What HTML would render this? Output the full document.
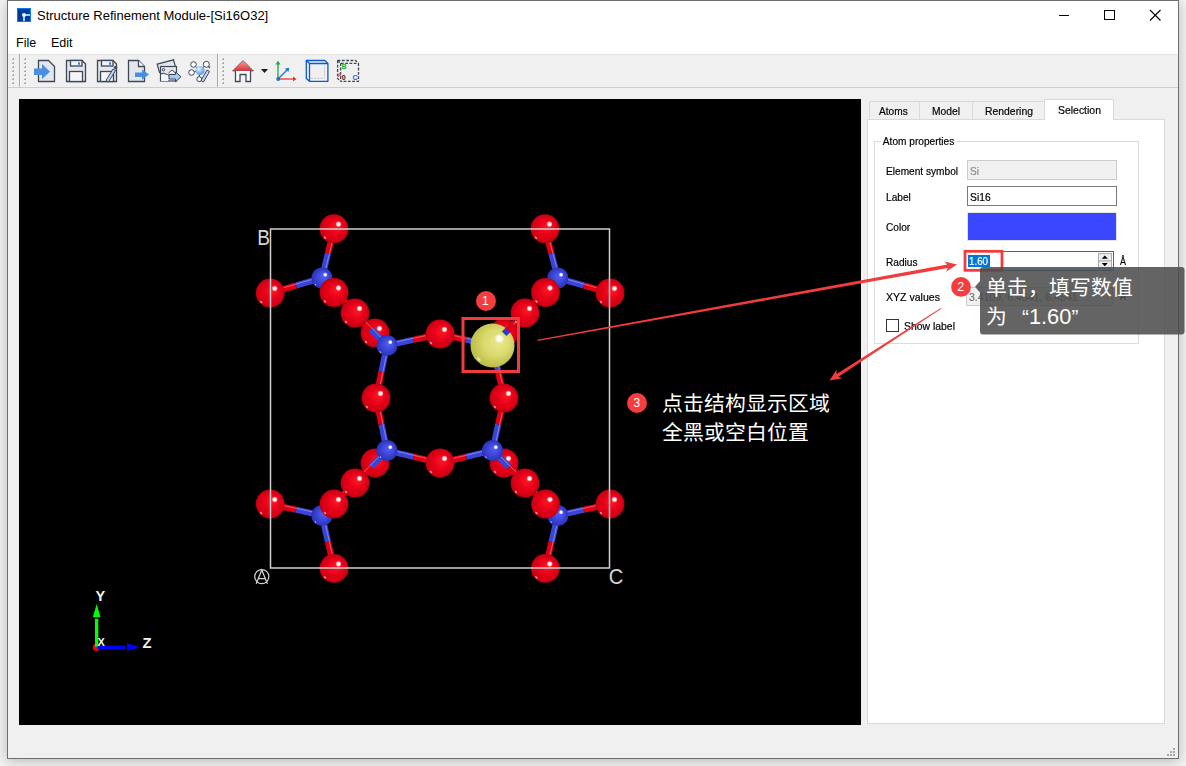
<!DOCTYPE html>
<html lang="zh-CN"><head><meta charset="utf-8">
<style>
*{margin:0;padding:0;box-sizing:border-box}
html,body{width:1186px;height:766px;overflow:hidden;background:#f3f3f3;font-family:"Liberation Sans",sans-serif;color:#000}
.abs{position:absolute}
#win{position:absolute;left:7px;top:0;width:1172px;height:759px;border:1px solid #6f6f6f;background:#f0f0f0;box-shadow:0 2px 12px rgba(0,0,0,.25)}
#titlebar{position:absolute;left:8px;top:1px;width:1170px;height:53px;background:#fff}
.t{position:absolute;white-space:nowrap;line-height:1}
#toolbar{position:absolute;left:8px;top:54px;width:1170px;height:34px;background:#f0f0f0;border-top:1px solid #e3e3e3;border-bottom:1px solid #cfcfcf}
#viewport{position:absolute;left:19px;top:99px;width:842px;height:626px;background:#000}
.p{font-size:11.2px;color:#000;transform:scaleX(.905);transform-origin:0 0;-webkit-text-stroke:.2px currentColor}
</style></head><body>
<div id="win"></div>
<div id="titlebar"></div>
<div id="toolbar"></div>
<div id="viewport"></div>

<!-- title -->
<svg class="abs" style="left:17px;top:8px" width="14" height="14" viewBox="0 0 14 14">
<rect x="0" y="0" width="14" height="14" fill="#0a7be0"/>
<rect x="1" y="1" width="12" height="12" fill="#003c96"/>
<rect x="6" y="6" width="7" height="2" fill="#8fd0ff"/>
<rect x="6" y="7" width="2" height="6" fill="#8fd0ff"/>
<circle cx="7" cy="7" r="2" fill="#e8f6ff"/>
</svg>
<div class="t" style="left:37px;top:9px;font-size:13px">Structure Refinement Module-[Si16O32]</div>
<div class="t" style="left:16px;top:37px;font-size:12.5px">File</div>
<div class="t" style="left:51px;top:37px;font-size:12.5px">Edit</div>

<!-- window controls -->
<svg class="abs" style="left:1040px;top:0" width="138" height="32">
<line x1="19" y1="15.5" x2="29" y2="15.5" stroke="#000" stroke-width="1"/>
<rect x="64.5" y="10.5" width="10" height="9" fill="none" stroke="#000" stroke-width="1"/>
<line x1="110" y1="10" x2="120.5" y2="20.5" stroke="#000" stroke-width="1.1"/>
<line x1="120.5" y1="10" x2="110" y2="20.5" stroke="#000" stroke-width="1.1"/>
</svg>


<!-- toolbar icons -->
<svg class="abs" style="left:0;top:54px" width="380" height="34" viewBox="0 54 380 34">
<g fill="#a8a8a8"><rect x="13" y="58" width="1" height="1"/><rect x="12" y="59" width="2" height="1"/><rect x="13" y="62" width="1" height="1"/><rect x="12" y="63" width="2" height="1"/><rect x="13" y="66" width="1" height="1"/><rect x="12" y="67" width="2" height="1"/><rect x="13" y="70" width="1" height="1"/><rect x="12" y="71" width="2" height="1"/><rect x="13" y="74" width="1" height="1"/><rect x="12" y="75" width="2" height="1"/><rect x="13" y="78" width="1" height="1"/><rect x="12" y="79" width="2" height="1"/><rect x="13" y="82" width="1" height="1"/><rect x="12" y="83" width="2" height="1"/><rect x="25" y="58" width="1" height="1"/><rect x="24" y="59" width="2" height="1"/><rect x="25" y="62" width="1" height="1"/><rect x="24" y="63" width="2" height="1"/><rect x="25" y="66" width="1" height="1"/><rect x="24" y="67" width="2" height="1"/><rect x="25" y="70" width="1" height="1"/><rect x="24" y="71" width="2" height="1"/><rect x="25" y="74" width="1" height="1"/><rect x="24" y="75" width="2" height="1"/><rect x="25" y="78" width="1" height="1"/><rect x="24" y="79" width="2" height="1"/><rect x="25" y="82" width="1" height="1"/><rect x="24" y="83" width="2" height="1"/><rect x="223" y="58" width="1" height="1"/><rect x="222" y="59" width="2" height="1"/><rect x="223" y="62" width="1" height="1"/><rect x="222" y="63" width="2" height="1"/><rect x="223" y="66" width="1" height="1"/><rect x="222" y="67" width="2" height="1"/><rect x="223" y="70" width="1" height="1"/><rect x="222" y="71" width="2" height="1"/><rect x="223" y="74" width="1" height="1"/><rect x="222" y="75" width="2" height="1"/><rect x="223" y="78" width="1" height="1"/><rect x="222" y="79" width="2" height="1"/><rect x="223" y="82" width="1" height="1"/><rect x="222" y="83" width="2" height="1"/></g>
<rect x="19" y="54" width="1" height="33" fill="#a8a8a8"/><rect x="20" y="54" width="1" height="33" fill="#fafafa"/>
<rect x="217" y="54" width="1" height="33" fill="#a8a8a8"/><rect x="218" y="54" width="1" height="33" fill="#fafafa"/>
<g stroke="#3c4858" stroke-width="1.3" stroke-linejoin="miter">
<!-- icon1 import -->
<path d="M38.5 60.5 H48.5 L54.5 66.5 V81.5 H38.5 Z" fill="#e4e6ec"/>
<!-- icon2 save -->
<path d="M66.5 60.5 H82 L85.5 64 V81.5 H66.5 Z" fill="#e4e6ec"/>
<rect x="70.5" y="60.5" width="11.5" height="5.5" fill="#f4f5f8"/>
<rect x="69.5" y="71.5" width="13" height="10" fill="#f4f5f8"/>
<!-- icon3 save as -->
<path d="M97.5 60.5 H113 L116.5 64 V81.5 H97.5 Z" fill="#e4e6ec"/>
<rect x="101.5" y="60.5" width="11.5" height="5.5" fill="#f4f5f8"/>
<rect x="100.5" y="71.5" width="13" height="10" fill="#f4f5f8"/>
<!-- icon4 export -->
<path d="M128.5 60.5 H138.5 L144.5 66.5 V81.5 H128.5 Z" fill="#e4e6ec"/>
<path d="M138.5 60.5 V66.5 H144.5" fill="#fff"/>
</g>
<path d="M34 68.5 H42 V64 L50 71.7 L42 79 V74.9 H34 Z" fill="#4a90e2"/>
<rect x="78" y="62.3" width="2" height="2.5" fill="#3a86e0"/>
<rect x="109" y="62.3" width="2" height="2.5" fill="#3a86e0"/>
<path d="M106 80.5 L113 69 L115.5 70.5 L108.5 82 Z" fill="#bcd6f4" stroke="#3c4858" stroke-width="1"/>
<path d="M113.5 68 L115 65.8 L117.5 67.3 L116 69.5 Z" fill="#3c4858"/>
<path d="M135 72.4 H142 V69.6 L149 74.5 L142 79.7 V77 H135 Z" fill="#4a90e2"/>
<!-- icon5 image export -->
<g stroke="#3c4858" stroke-width="1.2">
<path d="M157.2 64.2 L173.5 59.8 L175.8 68 L159.5 72.4 Z" fill="#e4e6ec"/>
<rect x="160.5" y="66.5" width="16" height="14.5" fill="#e4e6ec"/>
<path d="M160.5 74 Q164 72 167 74.5 T172 74" fill="none" stroke-width="1"/>
<circle cx="163.5" cy="69.7" r="1.2" fill="none" stroke-width="1"/>
<path d="M168.5 73 L172 70 L175.5 73" fill="#f4f5f8" stroke-width="1"/>
</g>
<rect x="161" y="75" width="7" height="6" fill="#f4f5f8"/>
<path d="M169 74.5 H175.5 V72 L181 76.8 L175.5 81.8 V79 H169 Z" fill="#a8ccf2" stroke="#3c4858" stroke-width="1"/>
<!-- icon6 molecule -->
<g stroke="#3c4858" stroke-width="1" fill="#fff">
<line x1="193.5" y1="64.5" x2="200" y2="70.5"/><line x1="206" y1="64.5" x2="200" y2="70.5"/><line x1="191.5" y1="72.5" x2="200" y2="70.5"/><line x1="199" y1="79" x2="200" y2="70.5"/>
<circle cx="193.5" cy="64.5" r="2.8"/><circle cx="206.3" cy="64.3" r="3"/><circle cx="191.5" cy="72.5" r="2.8"/><circle cx="199.3" cy="79.2" r="2.5"/>
<path d="M201 80.5 L207 70 L209.5 71.5 L203.5 82 Z" fill="#bcd6f4"/>
</g>
<defs>
<radialGradient id="tbball" cx="40%" cy="35%" r="65%"><stop offset="0" stop-color="#e8f3ff"/><stop offset="1" stop-color="#4f95e6"/></radialGradient>
<linearGradient id="roof" x1="0" y1="0" x2="0" y2="1"><stop offset="0" stop-color="#ff9a9a"/><stop offset="1" stop-color="#e03030"/></linearGradient>
</defs>
<circle cx="200" cy="70.5" r="4.6" fill="url(#tbball)"/>
<path d="M208 67 L210.5 66 L209.5 68.5 Z" fill="#3c4858"/>
<!-- house -->
<path d="M232.5 71 L243 60.5 L253.5 71 Z" fill="url(#roof)" stroke="#55606e" stroke-width="0.8"/>
<path d="M235.5 71 V81.5 H240 V74.5 H246 V81.5 H250.5 V71" fill="#fff" stroke="#3c4858" stroke-width="1.3"/>
<path d="M261 69 H268 L264.5 73 Z" fill="#1a1a1a"/>
<!-- axes -->
<line x1="278" y1="79" x2="278" y2="64" stroke="#19a83c" stroke-width="1.3"/>
<path d="M275.5 64.5 L278 60.8 L280.5 64.5 Z" fill="#19a83c"/>
<line x1="278" y1="79" x2="294" y2="79" stroke="#ee3333" stroke-width="1.3"/>
<path d="M293 76.5 L296.5 79 L293 81.5 Z" fill="#ee3333"/>
<line x1="278" y1="79" x2="287" y2="70" stroke="#1f6fd6" stroke-width="1.3"/>
<path d="M285 68.5 L289.2 67.8 L288.5 72 Z" fill="#1f6fd6"/>
<circle cx="278.2" cy="79" r="2" fill="#1f6fd6"/>
<!-- cube -->
<g fill="none" stroke="#0a58d8" stroke-width="1.3" stroke-linejoin="round">
<path d="M306.3 60.5 H324.8 L327.9 63.5 V81.3 H309.5 L306.3 78.5 Z"/>
<path d="M306.3 60.5 L309.5 63.5 H327.9 M309.5 63.5 V81.3"/>
</g>
<path d="M311 78.3 H324.5 V65" fill="none" stroke="#c0c4cc" stroke-width="1" stroke-dasharray="2 1.2"/>
<!-- dashed cube -->
<g fill="none" stroke="#3c4858" stroke-width="1.3" stroke-dasharray="2.8 1.5">
<path d="M337.6 60.5 H355.6 L358.5 63.3"/>
<path d="M358.5 63.3 V81.3 H340.6"/>
<path d="M337.6 60.5 V78.5 L340.6 81.3"/>
<path d="M337.6 60.5 L340.6 63.3 H358.5 M340.6 63.3 V81.3"/>
</g>
<text x="341.4" y="68.8" font-family="Liberation Sans" font-weight="bold" font-size="7" fill="#16b33a">B</text>
<text x="337.8" y="76.9" font-family="Liberation Sans" font-weight="bold" font-size="5.5" fill="#e83838">A</text>
<text x="341.8" y="80.1" font-family="Liberation Sans" font-weight="bold" font-size="7" fill="#222">0</text>
<text x="352.6" y="80.1" font-family="Liberation Sans" font-weight="bold" font-size="7" fill="#1a62d6">C</text>
</svg>

<!-- right panel -->
<div class="abs" style="left:867px;top:119px;width:298px;height:605px;background:#fff;border:1px solid #d9d9d9"></div>
<div class="abs" style="left:869px;top:101px;width:51px;height:18px;background:#f0f0f0;border:1px solid #d9d9d9;border-bottom:none"></div>
<div class="abs" style="left:919px;top:101px;width:54px;height:18px;background:#f0f0f0;border:1px solid #d9d9d9;border-bottom:none"></div>
<div class="abs" style="left:972px;top:101px;width:73px;height:18px;background:#f0f0f0;border:1px solid #d9d9d9;border-bottom:none"></div>
<div class="abs" style="left:1044px;top:99px;width:70px;height:21px;background:#fff;border:1px solid #d9d9d9;border-bottom:none"></div>
<div class="t p" style="left:879px;top:106px">Atoms</div>
<div class="t p" style="left:932px;top:106px;transform:scaleX(.918)">Model</div>
<div class="t p" style="left:985px;top:106px;transform:scaleX(.929)">Rendering</div>
<div class="t p" style="left:1058px;top:105px;transform:scaleX(.933)">Selection</div>
<div class="abs" style="left:874px;top:141px;width:265px;height:203px;border:1px solid #dcdcdc"></div>
<div class="t p" style="left:881px;top:136px;background:#fff;padding:0 2px">Atom properties</div>
<div class="t p" style="left:886px;top:166px">Element symbol</div>
<div class="abs" style="left:967px;top:160px;width:150px;height:20px;background:#f0f0f0;border:1px solid #cccccc"></div>
<div class="t p" style="left:970px;top:166px;color:#8c8c8c">Si</div>
<div class="t p" style="left:886px;top:192px">Label</div>
<div class="abs" style="left:967px;top:186px;width:150px;height:20px;background:#fff;border:1px solid #7a7a7a"></div>
<div class="t p" style="left:970px;top:192px;transform:scaleX(.923)">Si16</div>
<div class="t p" style="left:886px;top:222px">Color</div>
<div class="abs" style="left:967px;top:212px;width:150px;height:29px;background:#3b47ff;border:1px solid #e3e3e3"></div>
<div class="t p" style="left:886px;top:257px">Radius</div>
<div class="abs" style="left:965px;top:251px;width:149px;height:20px;background:#fff;border:1px solid #0078d7"></div>
<div class="abs" style="left:968px;top:255px;width:22px;height:12px;background:#0078d7"></div>
<div class="t p" style="left:969px;top:256px;color:#fff;transform:scaleX(.872)">1.60</div>
<svg class="abs" style="left:1098px;top:253px" width="14" height="16"><rect x=".5" y=".5" width="13" height="7.5" fill="#ececec" stroke="#adadad"/><rect x=".5" y="8" width="13" height="7.5" fill="#ececec" stroke="#adadad"/><path d="M3.8 5.8 H9.8 L6.8 2.6 Z M3.8 10 H9.8 L6.8 13.2 Z" fill="#000"/></svg>
<div class="t p" style="left:1120px;top:256px;transform:scaleX(.8)">Å</div>
<div class="t p" style="left:886px;top:292px;transform:scaleX(.943)">XYZ values</div>
<div class="abs" style="left:966px;top:287px;width:147px;height:19px;background:#f0f0f0;border:1px solid #cccccc"></div>
<div class="t p" style="left:969px;top:292px;color:#747474;transform:scaleX(.944)">3.4109, 6.4541, 6.4541</div>
<div class="t p" style="left:1120px;top:291px;transform:scaleX(.8)">Å</div>
<div class="abs" style="left:886px;top:319px;width:13px;height:13px;background:#fff;border:1px solid #333"></div>
<div class="t p" style="left:904px;top:321px;transform:scaleX(.931)">Show label</div>
<!-- size grip -->
<svg class="abs" style="left:1161px;top:745px" width="16" height="12"><g fill="#a8a8a8"><rect x="12" y="3" width="2" height="2"/><rect x="9" y="6" width="2" height="2"/><rect x="12" y="6" width="2" height="2"/><rect x="6" y="9" width="2" height="2"/><rect x="9" y="9" width="2" height="2"/><rect x="12" y="9" width="2" height="2"/></g></svg>

<!--STRUCT-->
<svg class="abs" style="left:0;top:0" width="1186" height="766" viewBox="0 0 1186 766">
<defs>
<radialGradient id="gO" cx="0.5" cy="0.5" r="0.5" fx="0.62" fy="0.38"><stop offset="0" stop-color="#ff1c22"/><stop offset="0.55" stop-color="#e8001a"/><stop offset="0.9" stop-color="#d00012"/><stop offset="1" stop-color="#b5000e"/></radialGradient>
<radialGradient id="gS" cx="0.5" cy="0.5" r="0.5" fx="0.62" fy="0.38"><stop offset="0" stop-color="#5a62f0"/><stop offset="0.6" stop-color="#3a44d8"/><stop offset="1" stop-color="#2a32b0"/></radialGradient>
<radialGradient id="gY" cx="0.55" cy="0.45" r="0.55" fx="0.68" fy="0.4"><stop offset="0" stop-color="#eaea90"/><stop offset="0.55" stop-color="#dada6e"/><stop offset="1" stop-color="#bcbc48"/></radialGradient>
<radialGradient id="hl"><stop offset="0" stop-color="#fff"/><stop offset=".45" stop-color="#fff" stop-opacity=".95"/><stop offset="1" stop-color="#fff" stop-opacity="0"/></radialGradient>
<radialGradient id="hl2"><stop offset="0" stop-color="#fff" stop-opacity=".8"/><stop offset="1" stop-color="#fff" stop-opacity="0"/></radialGradient>
<filter id="hb" x="-1" y="-1" width="3" height="3"><feGaussianBlur stdDeviation="0.7"/></filter>
</defs>


<circle cx="375" cy="333" r="14.4" fill="url(#gO)"/><circle cx="379.5" cy="328.5" r="3.2" fill="url(#hl)"/><ellipse cx="366.0" cy="342.0" rx="2.2" ry="1.3" transform="rotate(45 366.0 342.0)" fill="url(#hl2)"/>
<circle cx="504" cy="333" r="14.4" fill="url(#gO)"/><circle cx="508.5" cy="328.5" r="3.2" fill="url(#hl)"/><ellipse cx="495.0" cy="342.0" rx="2.2" ry="1.3" transform="rotate(45 495.0 342.0)" fill="url(#hl2)"/>
<circle cx="375" cy="463" r="14.4" fill="url(#gO)"/><circle cx="379.5" cy="458.5" r="3.2" fill="url(#hl)"/><ellipse cx="366.0" cy="472.0" rx="2.2" ry="1.3" transform="rotate(45 366.0 472.0)" fill="url(#hl2)"/>
<circle cx="504" cy="463" r="14.4" fill="url(#gO)"/><circle cx="508.5" cy="458.5" r="3.2" fill="url(#hl)"/><ellipse cx="495.0" cy="472.0" rx="2.2" ry="1.3" transform="rotate(45 495.0 472.0)" fill="url(#hl2)"/>
<line x1="387" y1="345.5" x2="371.0" y2="329.25" stroke="#3a44d6" stroke-width="6.2"/><line x1="371.0" y1="329.25" x2="355" y2="313" stroke="#e00014" stroke-width="6.2"/><line x1="388.0" y1="344.5" x2="356.0" y2="312.0" stroke="#fff" stroke-opacity=".35" stroke-width="1"/>
<line x1="387" y1="345.5" x2="413.5" y2="339.75" stroke="#3a44d6" stroke-width="6.2"/><line x1="413.5" y1="339.75" x2="440" y2="334" stroke="#e00014" stroke-width="6.2"/><line x1="386.7" y1="344.1" x2="439.7" y2="332.6" stroke="#fff" stroke-opacity=".35" stroke-width="1"/>
<line x1="387" y1="345.5" x2="381.5" y2="371.75" stroke="#3a44d6" stroke-width="6.2"/><line x1="381.5" y1="371.75" x2="376" y2="398" stroke="#e00014" stroke-width="6.2"/><line x1="388.4" y1="345.8" x2="377.4" y2="398.3" stroke="#fff" stroke-opacity=".35" stroke-width="1"/>
<line x1="492.5" y1="345.5" x2="508.75" y2="329.25" stroke="#3a44d6" stroke-width="6.2"/><line x1="508.75" y1="329.25" x2="525" y2="313" stroke="#e00014" stroke-width="6.2"/><line x1="491.5" y1="344.5" x2="524.0" y2="312.0" stroke="#fff" stroke-opacity=".35" stroke-width="1"/>
<line x1="492.5" y1="345.5" x2="466.25" y2="339.75" stroke="#3a44d6" stroke-width="6.2"/><line x1="466.25" y1="339.75" x2="440" y2="334" stroke="#e00014" stroke-width="6.2"/><line x1="492.8" y1="344.1" x2="440.3" y2="332.6" stroke="#fff" stroke-opacity=".35" stroke-width="1"/>
<line x1="492.5" y1="345.5" x2="498.25" y2="371.75" stroke="#3a44d6" stroke-width="6.2"/><line x1="498.25" y1="371.75" x2="504" y2="398" stroke="#e00014" stroke-width="6.2"/><line x1="493.9" y1="345.2" x2="505.4" y2="397.7" stroke="#fff" stroke-opacity=".35" stroke-width="1"/>
<line x1="387" y1="450.5" x2="371.0" y2="466.75" stroke="#3a44d6" stroke-width="6.2"/><line x1="371.0" y1="466.75" x2="355" y2="483" stroke="#e00014" stroke-width="6.2"/><line x1="386.0" y1="449.5" x2="354.0" y2="482.0" stroke="#fff" stroke-opacity=".35" stroke-width="1"/>
<line x1="387" y1="450.5" x2="413.5" y2="456.75" stroke="#3a44d6" stroke-width="6.2"/><line x1="413.5" y1="456.75" x2="440" y2="463" stroke="#e00014" stroke-width="6.2"/><line x1="387.3" y1="449.1" x2="440.3" y2="461.6" stroke="#fff" stroke-opacity=".35" stroke-width="1"/>
<line x1="387" y1="450.5" x2="381.5" y2="424.25" stroke="#3a44d6" stroke-width="6.2"/><line x1="381.5" y1="424.25" x2="376" y2="398" stroke="#e00014" stroke-width="6.2"/><line x1="388.4" y1="450.2" x2="377.4" y2="397.7" stroke="#fff" stroke-opacity=".35" stroke-width="1"/>
<line x1="492.5" y1="450.5" x2="508.75" y2="466.75" stroke="#3a44d6" stroke-width="6.2"/><line x1="508.75" y1="466.75" x2="525" y2="483" stroke="#e00014" stroke-width="6.2"/><line x1="493.5" y1="449.5" x2="526.0" y2="482.0" stroke="#fff" stroke-opacity=".35" stroke-width="1"/>
<line x1="492.5" y1="450.5" x2="466.25" y2="456.75" stroke="#3a44d6" stroke-width="6.2"/><line x1="466.25" y1="456.75" x2="440" y2="463" stroke="#e00014" stroke-width="6.2"/><line x1="492.2" y1="449.1" x2="439.7" y2="461.6" stroke="#fff" stroke-opacity=".35" stroke-width="1"/>
<line x1="492.5" y1="450.5" x2="498.25" y2="424.25" stroke="#3a44d6" stroke-width="6.2"/><line x1="498.25" y1="424.25" x2="504" y2="398" stroke="#e00014" stroke-width="6.2"/><line x1="493.9" y1="450.8" x2="505.4" y2="398.3" stroke="#fff" stroke-opacity=".35" stroke-width="1"/>
<circle cx="387" cy="345.5" r="10.6" fill="url(#gS)"/><circle cx="390.3" cy="342.2" r="2.4" fill="url(#hl)"/><ellipse cx="380.4" cy="352.1" rx="1.6" ry="1.0" transform="rotate(45 380.4 352.1)" fill="url(#hl2)"/>
<circle cx="492.5" cy="345.5" r="22" fill="url(#gY)"/><circle cx="499.4" cy="338.6" r="4.9" fill="url(#hl)"/><ellipse cx="478.8" cy="359.2" rx="3.4" ry="2.0" transform="rotate(45 478.8 359.2)" fill="url(#hl2)"/>
<circle cx="387" cy="450.5" r="10.6" fill="url(#gS)"/><circle cx="390.3" cy="447.2" r="2.4" fill="url(#hl)"/><ellipse cx="380.4" cy="457.1" rx="1.6" ry="1.0" transform="rotate(45 380.4 457.1)" fill="url(#hl2)"/>
<circle cx="492.5" cy="450.5" r="10.6" fill="url(#gS)"/><circle cx="495.8" cy="447.2" r="2.4" fill="url(#hl)"/><ellipse cx="485.9" cy="457.1" rx="1.6" ry="1.0" transform="rotate(45 485.9 457.1)" fill="url(#hl2)"/>
<line x1="504.2" y1="333.8" x2="508.2" y2="329.8" stroke="#2a3bd0" stroke-width="6.4"/><line x1="507.8" y1="330.2" x2="516" y2="322" stroke="#d8001a" stroke-width="6.4"/><ellipse cx="516" cy="322" rx="1.3" ry="2.8" transform="rotate(45 516 322)" fill="#fff" opacity=".6" filter="url(#hb)"/>
<line x1="322" y1="278" x2="328.0" y2="253.35" stroke="#3a44d6" stroke-width="6.2"/><line x1="328.0" y1="253.35" x2="334" y2="228.7" stroke="#e00014" stroke-width="6.2"/><line x1="323.4" y1="278.3" x2="335.4" y2="229.0" stroke="#fff" stroke-opacity=".35" stroke-width="1"/>
<line x1="322" y1="278" x2="296.1" y2="285.5" stroke="#3a44d6" stroke-width="6.2"/><line x1="296.1" y1="285.5" x2="270.2" y2="293" stroke="#e00014" stroke-width="6.2"/><line x1="321.6" y1="276.7" x2="269.8" y2="291.7" stroke="#fff" stroke-opacity=".35" stroke-width="1"/>
<line x1="322" y1="278" x2="338.5" y2="295.5" stroke="#3a44d6" stroke-width="6.2"/><line x1="338.5" y1="295.5" x2="355" y2="313" stroke="#e00014" stroke-width="6.2"/><line x1="323.0" y1="277.0" x2="356.0" y2="312.0" stroke="#fff" stroke-opacity=".35" stroke-width="1"/>
<line x1="557.8" y1="278" x2="551.4" y2="253.35" stroke="#3a44d6" stroke-width="6.2"/><line x1="551.4" y1="253.35" x2="545" y2="228.7" stroke="#e00014" stroke-width="6.2"/><line x1="559.2" y1="277.6" x2="546.4" y2="228.3" stroke="#fff" stroke-opacity=".35" stroke-width="1"/>
<line x1="557.8" y1="278" x2="583.9" y2="285.5" stroke="#3a44d6" stroke-width="6.2"/><line x1="583.9" y1="285.5" x2="610" y2="293" stroke="#e00014" stroke-width="6.2"/><line x1="558.2" y1="276.7" x2="610.4" y2="291.7" stroke="#fff" stroke-opacity=".35" stroke-width="1"/>
<line x1="557.8" y1="278" x2="541.4" y2="295.5" stroke="#3a44d6" stroke-width="6.2"/><line x1="541.4" y1="295.5" x2="525" y2="313" stroke="#e00014" stroke-width="6.2"/><line x1="556.8" y1="277.0" x2="524.0" y2="312.0" stroke="#fff" stroke-opacity=".35" stroke-width="1"/>
<line x1="322" y1="515.5" x2="328.0" y2="541.95" stroke="#3a44d6" stroke-width="6.2"/><line x1="328.0" y1="541.95" x2="334" y2="568.4" stroke="#e00014" stroke-width="6.2"/><line x1="323.4" y1="515.2" x2="335.4" y2="568.1" stroke="#fff" stroke-opacity=".35" stroke-width="1"/>
<line x1="322" y1="515.5" x2="296.1" y2="509.75" stroke="#3a44d6" stroke-width="6.2"/><line x1="296.1" y1="509.75" x2="270.2" y2="504" stroke="#e00014" stroke-width="6.2"/><line x1="322.3" y1="514.1" x2="270.5" y2="502.6" stroke="#fff" stroke-opacity=".35" stroke-width="1"/>
<line x1="322" y1="515.5" x2="338.5" y2="499.25" stroke="#3a44d6" stroke-width="6.2"/><line x1="338.5" y1="499.25" x2="355" y2="483" stroke="#e00014" stroke-width="6.2"/><line x1="321.0" y1="514.5" x2="354.0" y2="482.0" stroke="#fff" stroke-opacity=".35" stroke-width="1"/>
<line x1="557.8" y1="515.5" x2="551.55" y2="541.95" stroke="#3a44d6" stroke-width="6.2"/><line x1="551.55" y1="541.95" x2="545.3" y2="568.4" stroke="#e00014" stroke-width="6.2"/><line x1="559.2" y1="515.8" x2="546.7" y2="568.7" stroke="#fff" stroke-opacity=".35" stroke-width="1"/>
<line x1="557.8" y1="515.5" x2="583.9" y2="509.75" stroke="#3a44d6" stroke-width="6.2"/><line x1="583.9" y1="509.75" x2="610" y2="504" stroke="#e00014" stroke-width="6.2"/><line x1="557.5" y1="514.1" x2="609.7" y2="502.6" stroke="#fff" stroke-opacity=".35" stroke-width="1"/>
<line x1="557.8" y1="515.5" x2="541.4" y2="499.25" stroke="#3a44d6" stroke-width="6.2"/><line x1="541.4" y1="499.25" x2="525" y2="483" stroke="#e00014" stroke-width="6.2"/><line x1="558.8" y1="514.5" x2="526.0" y2="482.0" stroke="#fff" stroke-opacity=".35" stroke-width="1"/>
<circle cx="355" cy="313" r="14.4" fill="url(#gO)"/><circle cx="359.5" cy="308.5" r="3.2" fill="url(#hl)"/><ellipse cx="346.0" cy="322.0" rx="2.2" ry="1.3" transform="rotate(45 346.0 322.0)" fill="url(#hl2)"/>
<circle cx="525" cy="313" r="14.4" fill="url(#gO)"/><circle cx="529.5" cy="308.5" r="3.2" fill="url(#hl)"/><ellipse cx="516.0" cy="322.0" rx="2.2" ry="1.3" transform="rotate(45 516.0 322.0)" fill="url(#hl2)"/>
<circle cx="355" cy="483" r="14.4" fill="url(#gO)"/><circle cx="359.5" cy="478.5" r="3.2" fill="url(#hl)"/><ellipse cx="346.0" cy="492.0" rx="2.2" ry="1.3" transform="rotate(45 346.0 492.0)" fill="url(#hl2)"/>
<circle cx="525" cy="483" r="14.4" fill="url(#gO)"/><circle cx="529.5" cy="478.5" r="3.2" fill="url(#hl)"/><ellipse cx="516.0" cy="492.0" rx="2.2" ry="1.3" transform="rotate(45 516.0 492.0)" fill="url(#hl2)"/>
<circle cx="322" cy="278" r="10.6" fill="url(#gS)"/><circle cx="325.3" cy="274.7" r="2.4" fill="url(#hl)"/><ellipse cx="315.4" cy="284.6" rx="1.6" ry="1.0" transform="rotate(45 315.4 284.6)" fill="url(#hl2)"/>
<circle cx="557.8" cy="278" r="10.6" fill="url(#gS)"/><circle cx="561.1" cy="274.7" r="2.4" fill="url(#hl)"/><ellipse cx="551.2" cy="284.6" rx="1.6" ry="1.0" transform="rotate(45 551.2 284.6)" fill="url(#hl2)"/>
<circle cx="322" cy="515.5" r="10.6" fill="url(#gS)"/><circle cx="325.3" cy="512.2" r="2.4" fill="url(#hl)"/><ellipse cx="315.4" cy="522.1" rx="1.6" ry="1.0" transform="rotate(45 315.4 522.1)" fill="url(#hl2)"/>
<circle cx="557.8" cy="515.5" r="10.6" fill="url(#gS)"/><circle cx="561.1" cy="512.2" r="2.4" fill="url(#hl)"/><ellipse cx="551.2" cy="522.1" rx="1.6" ry="1.0" transform="rotate(45 551.2 522.1)" fill="url(#hl2)"/>
<circle cx="334" cy="292.5" r="14.4" fill="url(#gO)"/><circle cx="338.5" cy="288.0" r="3.2" fill="url(#hl)"/><ellipse cx="325.0" cy="301.5" rx="2.2" ry="1.3" transform="rotate(45 325.0 301.5)" fill="url(#hl2)"/>
<circle cx="545.5" cy="292.5" r="14.4" fill="url(#gO)"/><circle cx="550.0" cy="288.0" r="3.2" fill="url(#hl)"/><ellipse cx="536.5" cy="301.5" rx="2.2" ry="1.3" transform="rotate(45 536.5 301.5)" fill="url(#hl2)"/>
<circle cx="334" cy="504" r="14.4" fill="url(#gO)"/><circle cx="338.5" cy="499.5" r="3.2" fill="url(#hl)"/><ellipse cx="325.0" cy="513.0" rx="2.2" ry="1.3" transform="rotate(45 325.0 513.0)" fill="url(#hl2)"/>
<circle cx="545.5" cy="504" r="14.4" fill="url(#gO)"/><circle cx="550.0" cy="499.5" r="3.2" fill="url(#hl)"/><ellipse cx="536.5" cy="513.0" rx="2.2" ry="1.3" transform="rotate(45 536.5 513.0)" fill="url(#hl2)"/>
<circle cx="334" cy="228.7" r="14.4" fill="url(#gO)"/><circle cx="338.5" cy="224.2" r="3.2" fill="url(#hl)"/><ellipse cx="325.0" cy="237.7" rx="2.2" ry="1.3" transform="rotate(45 325.0 237.7)" fill="url(#hl2)"/>
<circle cx="545" cy="228.7" r="14.4" fill="url(#gO)"/><circle cx="549.5" cy="224.2" r="3.2" fill="url(#hl)"/><ellipse cx="536.0" cy="237.7" rx="2.2" ry="1.3" transform="rotate(45 536.0 237.7)" fill="url(#hl2)"/>
<circle cx="270.2" cy="293" r="14.4" fill="url(#gO)"/><circle cx="274.7" cy="288.5" r="3.2" fill="url(#hl)"/><ellipse cx="261.2" cy="302.0" rx="2.2" ry="1.3" transform="rotate(45 261.2 302.0)" fill="url(#hl2)"/>
<circle cx="610" cy="293" r="14.4" fill="url(#gO)"/><circle cx="614.5" cy="288.5" r="3.2" fill="url(#hl)"/><ellipse cx="601.0" cy="302.0" rx="2.2" ry="1.3" transform="rotate(45 601.0 302.0)" fill="url(#hl2)"/>
<circle cx="270.2" cy="504" r="14.4" fill="url(#gO)"/><circle cx="274.7" cy="499.5" r="3.2" fill="url(#hl)"/><ellipse cx="261.2" cy="513.0" rx="2.2" ry="1.3" transform="rotate(45 261.2 513.0)" fill="url(#hl2)"/>
<circle cx="610" cy="504" r="14.4" fill="url(#gO)"/><circle cx="614.5" cy="499.5" r="3.2" fill="url(#hl)"/><ellipse cx="601.0" cy="513.0" rx="2.2" ry="1.3" transform="rotate(45 601.0 513.0)" fill="url(#hl2)"/>
<circle cx="334" cy="568.4" r="14.4" fill="url(#gO)"/><circle cx="338.5" cy="563.9" r="3.2" fill="url(#hl)"/><ellipse cx="325.0" cy="577.4" rx="2.2" ry="1.3" transform="rotate(45 325.0 577.4)" fill="url(#hl2)"/>
<circle cx="545.3" cy="568.4" r="14.4" fill="url(#gO)"/><circle cx="549.8" cy="563.9" r="3.2" fill="url(#hl)"/><ellipse cx="536.3" cy="577.4" rx="2.2" ry="1.3" transform="rotate(45 536.3 577.4)" fill="url(#hl2)"/>
<circle cx="440" cy="334" r="14.4" fill="url(#gO)"/><circle cx="444.5" cy="329.5" r="3.2" fill="url(#hl)"/><ellipse cx="431.0" cy="343.0" rx="2.2" ry="1.3" transform="rotate(45 431.0 343.0)" fill="url(#hl2)"/>
<circle cx="440" cy="463" r="14.4" fill="url(#gO)"/><circle cx="444.5" cy="458.5" r="3.2" fill="url(#hl)"/><ellipse cx="431.0" cy="472.0" rx="2.2" ry="1.3" transform="rotate(45 431.0 472.0)" fill="url(#hl2)"/>
<circle cx="376" cy="398" r="14.4" fill="url(#gO)"/><circle cx="380.5" cy="393.5" r="3.2" fill="url(#hl)"/><ellipse cx="367.0" cy="407.0" rx="2.2" ry="1.3" transform="rotate(45 367.0 407.0)" fill="url(#hl2)"/>
<circle cx="504" cy="398" r="14.4" fill="url(#gO)"/><circle cx="508.5" cy="393.5" r="3.2" fill="url(#hl)"/><ellipse cx="495.0" cy="407.0" rx="2.2" ry="1.3" transform="rotate(45 495.0 407.0)" fill="url(#hl2)"/>
<g fill="none" stroke="#d0d0d0" stroke-width="1.5">
<rect x="270.5" y="229" width="339" height="339"/>
</g>
<g fill="#d6d6d6" font-family="Liberation Sans" font-size="20.8">
<text transform="translate(257.2 244.6) scale(.92 1.04)">B</text><text transform="translate(608.8 584.3) scale(.97 1.04)">C</text>
</g>
<g fill="none" stroke="#d2d2d2" stroke-width="1.25">
<circle cx="261.8" cy="576.6" r="7.1"/>
<path d="M256.2 583.8 L261.8 570 L267.4 583.8 M258.5 578.6 H265.1"/>
</g>
</svg>
<!--/STRUCT-->

<!-- annotations -->
<svg class="abs" style="left:0;top:0" width="1186" height="766">
<rect x="463" y="318.5" width="55.5" height="53" fill="none" stroke="#f03c3c" stroke-width="3"/>
<rect x="965" y="251.3" width="37" height="19" fill="none" stroke="#f03c3c" stroke-width="2.8"/>
<path d="M537.6 340.9 L947.9 268.0 L946.1 271.8 L957.0 264.5 L944.3 261.5 L947.2 264.4 L537.4 339.7 Z" fill="#f03c3c"/>
<path d="M940.8 307.9 L836.6 373.9 L836.7 369.6 L829.5 380.5 L842.4 378.3 L838.5 376.7 L941.2 308.7 Z" fill="#f03c3c"/>
<circle cx="486" cy="301" r="10" fill="#f53d3d"/>
<circle cx="637" cy="403" r="10" fill="#f53d3d"/>
</svg>
<div class="t" style="left:482px;top:295px;color:#fff;font-size:12px">1</div>
<div class="t" style="left:633.5px;top:396.5px;color:#fff;font-size:12px">3</div>
<div class="t" style="left:662px;top:388.5px;color:#fff;font-size:20.8px;line-height:29.5px;font-weight:350">点击结构显示区域<br>全黑或空白位置</div>
<!-- tooltip -->
<svg class="abs" style="left:0;top:0" width="1186" height="766">
<path d="M983 267 H1181.5 Q1184.5 267 1184.5 270 V331.5 Q1184.5 334.5 1181.5 334.5 H983 Q980 334.5 980 331.5 V292.5 L975 286.8 L980 281 V270 Q980 267 983 267 Z" fill="#4a4a4a" fill-opacity=".86"/>
<circle cx="961" cy="286.9" r="9.9" fill="#f53d3d"/>
</svg>
<div class="t" style="left:957.3px;top:281px;color:#fff;font-size:12.5px">2</div>
<div class="t" style="left:986px;top:273px;color:#fff;font-size:20.8px;line-height:29px;font-weight:350">单击，填写数值<br>为<span style="margin-left:15px">“</span><span style="font-size:21.8px">1.60</span>”</div>
<!-- axes indicator -->
<svg class="abs" style="left:0;top:0" width="1186" height="766">
<circle cx="96.4" cy="647.2" r="3.5" fill="#ff0000"/>
<rect x="95" y="618.8" width="3.3" height="28" fill="#00ff00"/>
<path d="M92.8 617.2 L96.7 604 L100.5 617.2 Z" fill="#00ff00"/>
<rect x="97.5" y="645.6" width="28" height="3.4" fill="#0000ff"/>
<path d="M127 643.3 L140 647.3 L127 651 Z" fill="#0000ff"/>
<g fill="#f4f4f4" font-family="Liberation Sans" font-weight="bold">
<text x="95.6" y="601.3" font-size="14.5">Y</text>
<text x="142.6" y="648.2" font-size="14.8">Z</text>
<text x="97.6" y="645.6" font-size="11">X</text>
</g>
</svg>
</body></html>
